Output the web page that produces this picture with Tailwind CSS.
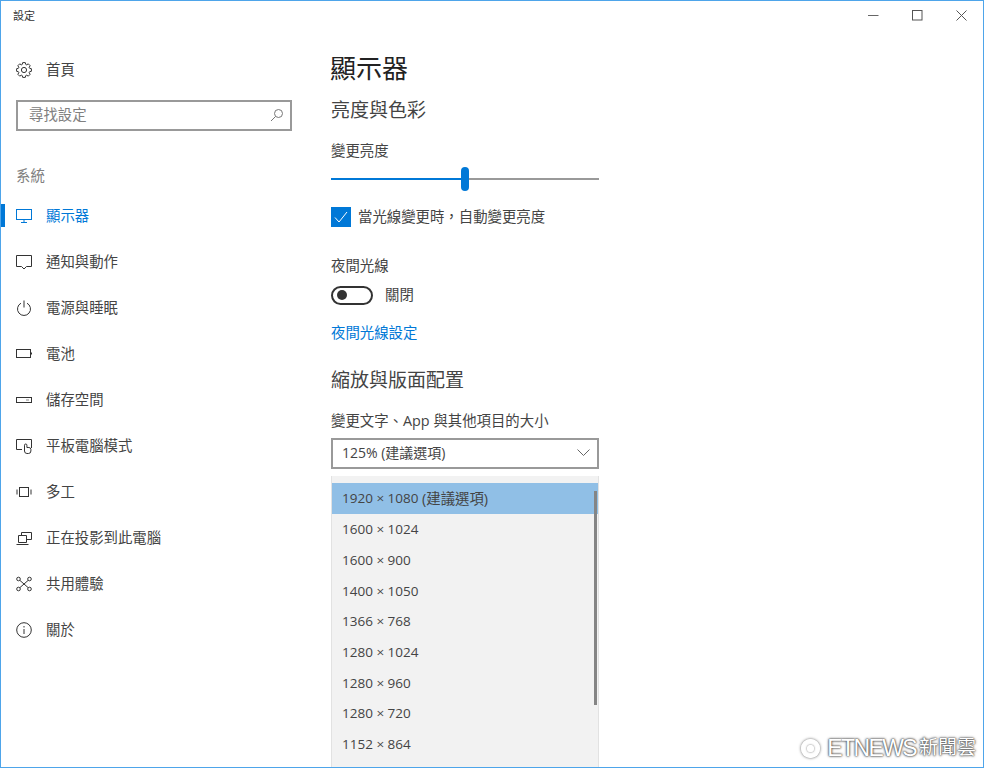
<!DOCTYPE html>
<html lang="zh-Hant">
<head>
    <meta charset="UTF-8">
    <title>設定</title>
    <script src="https://cdn.jsdelivr.net/npm/@tailwindcss/browser@4"></script>
</head>
<body class="bg-white">
    <div class="relative w-[984px] h-[768px] overflow-hidden border border-[#4ea5ea] bg-white text-[#444] font-['Open_Sans','Noto_Sans_CJK_TC',sans-serif]">
        <!-- title bar -->
        <div class="flex items-center justify-between h-[28px] pl-3 text-[#333]">
            <span class="text-[11px] leading-none">設定</span>
            <div class="flex">
                <button class="w-[44px] h-[28px] flex items-center justify-center"><svg width="11" height="11" viewBox="0 0 11 11"><path d="M0 5.500h10.500" stroke="#666" stroke-width="1"/></svg></button>
                <button class="w-[44px] h-[28px] flex items-center justify-center"><svg width="11" height="11" viewBox="0 0 11 11"><rect x=".5" y=".5" width="9.500" height="9.500" fill="none" stroke="#555"/></svg></button>
                <button class="w-[44px] h-[28px] flex items-center justify-center"><svg width="11" height="11" viewBox="0 0 11 11"><path d="M.5.5l10 10M10.500.5l-10 10" stroke="#555" fill="none"/></svg></button>
            </div>
        </div>

        <div class="flex">
            <!-- sidebar -->
            <nav class="w-[330px] shrink-0">
                <div class="flex items-center h-[46px] mt-[18px] pl-[15px] text-[14.4px]">
                    <svg class="w-4 h-4 mr-[14px]" viewBox="0 0 16 16" fill="none" stroke="#333"><polygon points="13.52,6.21 15.39,6.70 15.39,9.30 13.52,9.79 13.17,10.64 14.14,12.31 12.31,14.14 10.64,13.17 9.79,13.52 9.30,15.39 6.70,15.39 6.21,13.52 5.36,13.17 3.69,14.14 1.86,12.31 2.83,10.64 2.48,9.79 .61,9.30 .61,6.70 2.48,6.21 2.83,5.36 1.86,3.69 3.69,1.86 5.36,2.83 6.21,2.48 6.70,.61 9.30,.61 9.79,2.48 10.64,2.83 12.31,1.86 14.14,3.69 13.17,5.36"/><circle cx="8" cy="8" r="2.600"/></svg>
                    <span>首頁</span>
                </div>
                <div class="flex items-center justify-between w-[276px] h-[31px] ml-[15px] mt-[7px] border-2 border-[#999] pl-[11px] pr-[6px] pb-[2px] text-[14.4px] text-[#808080]">
                    <span>尋找設定</span>
                    <svg class="w-[14px] h-[14px]" viewBox="0 0 14 14" fill="none" stroke="#777"><circle cx="8.500" cy="5.500" r="4"/><path d="M5.500 8.500L1 13"/></svg>
                </div>
                <div class="ml-[15px] mt-[35px] text-[14.4px] leading-5 text-[#808080]">系統</div>

                <div class="mt-[7px] text-[14.4px]">
                    <a class="relative flex items-center h-[46px] pl-[15px] text-[#0078d7]">
                        <span class="absolute left-0 top-[11px] w-[4px] h-[23px] bg-[#0078d7]"></span>
                        <svg class="w-4 h-4 mr-[14px]" viewBox="0 0 16 16" fill="none" stroke="#0078d7"><rect x=".5" y="1.500" width="15" height="10"/><path d="M5 14.500h6M8 12v2"/></svg>
                        <span>顯示器</span>
                    </a>
                    <a class="flex items-center h-[46px] pl-[15px]">
                        <svg class="w-4 h-4 mr-[14px]" viewBox="0 0 16 16" fill="none" stroke="#333"><path d="M.5 1.500h15v11h-5L8 15l-2.500-2.500h-5z"/></svg>
                        <span>通知與動作</span>
                    </a>
                    <a class="flex items-center h-[46px] pl-[15px]">
                        <svg class="w-4 h-4 mr-[14px]" viewBox="0 0 16 16" fill="none" stroke="#333"><path d="M5 3.200a6.500 6.500 0 1 0 6 0M8 .5v7"/></svg>
                        <span>電源與睡眠</span>
                    </a>
                    <a class="flex items-center h-[46px] pl-[15px]">
                        <svg class="w-4 h-4 mr-[14px]" viewBox="0 0 16 16" fill="none" stroke="#333"><rect x=".5" y="3.500" width="14" height="8"/><path d="M15.500 6.500v2"/></svg>
                        <span>電池</span>
                    </a>
                    <a class="flex items-center h-[46px] pl-[15px]">
                        <svg class="w-4 h-4 mr-[14px]" viewBox="0 0 16 16" fill="none" stroke="#333"><rect x=".5" y="5.500" width="15" height="5"/><path d="M10 8h3" stroke="#888"/></svg>
                        <span>儲存空間</span>
                    </a>
                    <a class="flex items-center h-[46px] pl-[15px]">
                        <svg class="w-4 h-4 mr-[14px]" viewBox="0 0 16 16" fill="none" stroke="#333"><path d="M6 11.500H.5v-10h15V10"/><path d="M8.500 13V7.200a1.200 1.200 0 0 1 2.400 0V9.500h2a2 2 0 0 1 2 2V13a2.500 2.500 0 0 1-2.500 2.500h-1.500A2.500 2.500 0 0 1 8.500 13z"/></svg>
                        <span>平板電腦模式</span>
                    </a>
                    <a class="flex items-center h-[46px] pl-[15px]">
                        <svg class="w-4 h-4 mr-[14px]" viewBox="0 0 16 16" fill="none" stroke="#333"><rect x="3.500" y="3.500" width="9" height="9"/><path d="M1 5.500v5M15 5.500v5"/></svg>
                        <span>多工</span>
                    </a>
                    <a class="flex items-center h-[46px] pl-[15px]">
                        <svg class="w-4 h-4 mr-[14px]" viewBox="0 0 16 16" fill="none" stroke="#333"><path d="M5.500 5V2.500h10v7H11"/><path d="M2.500 5.500h8v7h-8zM.5 14.500h12"/></svg>
                        <span>正在投影到此電腦</span>
                    </a>
                    <a class="flex items-center h-[46px] pl-[15px]">
                        <svg class="w-4 h-4 mr-[14px]" viewBox="0 0 16 16" fill="none" stroke="#333"><circle cx="2.500" cy="3" r="1.800"/><circle cx="13.500" cy="3" r="1.800"/><circle cx="2.500" cy="13" r="1.800"/><circle cx="13.500" cy="13" r="1.800"/><path d="M4 4.500l8 7M12 4.500l-8 7"/></svg>
                        <span>共用體驗</span>
                    </a>
                    <a class="flex items-center h-[46px] pl-[15px]">
                        <svg class="w-4 h-4 mr-[14px]" viewBox="0 0 16 16" fill="none" stroke="#333"><circle cx="8" cy="8" r="7.300"/><path d="M8 7v5M8 4v1.500"/></svg>
                        <span>關於</span>
                    </a>
                </div>
            </nav>

            <!-- content -->
            <main class="w-[268px] text-[14.4px]">
                <h1 class="text-[26px] leading-[36px] mt-[21px] -ml-[1px] text-[#222]">顯示器</h1>
                <h2 class="text-[19px] leading-[26px] mt-[11px]">亮度與色彩</h2>
                <div class="leading-5 mt-[18px]">變更亮度</div>

                <div class="flex items-center h-[24px] mt-[6px]">
                    <div class="w-[130px] h-[2px] bg-[#0078d7]"></div>
                    <div class="w-[8px] h-[24px] rounded-[4px] bg-[#0078d7]"></div>
                    <div class="flex-1 h-[2px] bg-[#999]"></div>
                </div>

                <div class="flex items-center mt-[16px]">
                    <span class="flex items-center justify-center w-5 h-5 mr-[7px] bg-[#0078d7]">
                        <svg class="w-[14px] h-[14px]" viewBox="0 0 14 14" fill="none" stroke="#fff"><path d="M1 7.500l4 4.500 8-10"/></svg>
                    </span>
                    <span class="leading-5">當光線變更時，自動變更亮度</span>
                </div>

                <div class="leading-5 mt-[29px]">夜間光線</div>
                <div class="flex items-center mt-[9px]">
                    <span class="flex items-center w-[42px] h-[19px] mr-[12px] pl-[4px] rounded-full border-2 border-[#333]">
                        <span class="w-[10px] h-[10px] rounded-full bg-[#333]"></span>
                    </span>
                    <span class="leading-5">關閉</span>
                </div>
                <a class="block leading-5 mt-[18px] text-[#0078d7]">夜間光線設定</a>

                <h2 class="text-[19px] leading-[26px] mt-[24px]">縮放與版面配置</h2>
                <div class="leading-5 mt-[18px]">變更文字、App 與其他項目的大小</div>
                <div class="flex items-center justify-between h-[31px] mt-[7px] border-2 border-[#999] pl-[9px] pr-[7px] pb-[2px]">
                    <span class="text-[14px]">125% (建議選項)</span>
                    <svg class="w-[13px] h-[8px]" viewBox="0 0 13 8" fill="none" stroke="#666"><path d="M.5.5l6 6 6-6"/></svg>
                </div>

                <!-- resolution dropdown -->
                <div class="relative mt-[7px] h-[300px] pt-[7px] bg-[#f2f2f2] border-x border-[#e2e2e2] text-[13.5px]">
                    <div class="absolute right-[1px] top-[15px] w-[3px] h-[214px] bg-[#858585]"></div>
                    <div class="flex items-center h-[31px] pl-[10px] bg-[#90bfe6]">1920 × 1080&nbsp;<span class="text-[14.4px]">(建議選項)</span></div>
                    <div class="flex items-center h-[30.700px] pl-[10px]">1600 × 1024</div>
                    <div class="flex items-center h-[30.700px] pl-[10px]">1600 × 900</div>
                    <div class="flex items-center h-[30.700px] pl-[10px]">1400 × 1050</div>
                    <div class="flex items-center h-[30.700px] pl-[10px]">1366 × 768</div>
                    <div class="flex items-center h-[30.700px] pl-[10px]">1280 × 1024</div>
                    <div class="flex items-center h-[30.700px] pl-[10px]">1280 × 960</div>
                    <div class="flex items-center h-[30.700px] pl-[10px]">1280 × 720</div>
                    <div class="flex items-center h-[30.700px] pl-[10px]">1152 × 864</div>
                </div>
            </main>
        </div>

        <!-- watermark -->
        <div class="absolute right-[7px] bottom-[7px] flex items-center text-[23px] leading-6 text-white font-['Liberation_Sans','Noto_Sans_CJK_TC',sans-serif] [text-shadow:0_0_3px_#555,0_0_2px_#555,0_0_1px_#555]">
            <span class="flex items-center justify-center w-[19px] h-[19px] mr-[7px] rounded-full border-[3px] border-white shadow-[0_0_3px_#555]"><span class="w-[7px] h-[7px] rounded-full border-2 border-white shadow-[0_0_2px_#555]"></span></span>
            <span class="tracking-[-1.6px]">ETNEWS</span><span class="ml-[3px] text-[19px]">新聞雲</span>
        </div>
    </div>
</body>
</html>
